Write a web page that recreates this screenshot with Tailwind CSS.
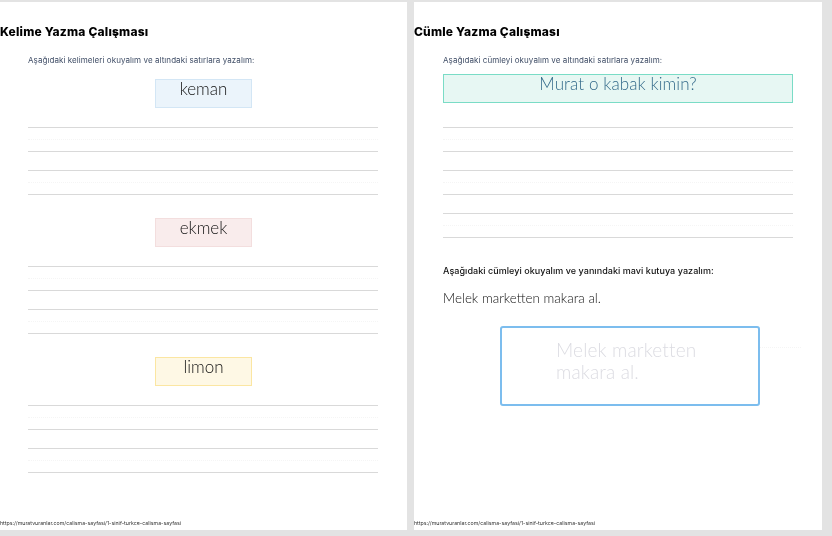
<!DOCTYPE html>
<html lang="tr">
<head>
  <meta charset="UTF-8">
  <title>Yazma Çalışması</title>
  <script src="https://cdn.jsdelivr.net/npm/@tailwindcss/browser@4"></script>
</head>
<body class="bg-[#e3e3e3] w-[832px] h-[536px] overflow-hidden font-['Inter','Liberation_Sans',sans-serif]">
  <div class="flex gap-[7px] pt-[2px] blur-[0.3px]">

    <!-- Kelime sayfasi -->
    <div class="w-[407px] h-[528px] bg-white flex flex-col">
      <h1 class="mt-[23px] h-[14px] text-[12px] leading-[14px] font-extrabold text-black tracking-[0.2px]">Kelime Yazma Çalışması</h1>
      <p class="mt-[15px] ml-[28px] h-[12px] text-[8px] leading-[12px] text-[#3f4d66] tracking-[0.07px]">Aşağıdaki kelimeleri okuyalım ve altındaki satırlara yazalım:</p>

      <div class="mt-[13px] ml-[155px] w-[97px] h-[29px] bg-[#ebf4fb] border border-[#d3e6f5] text-center text-[17px] leading-[18px] font-['Lato',sans-serif] font-light text-[#111]">keman</div>
      <div class="mt-[19px] ml-[28px] w-[350px]">
        <div class="h-[24px] border-t border-[#d9d9d9] relative"><div class="absolute top-[11px] inset-x-0 border-t border-dotted border-[#f5f5f5]"></div></div>
        <div class="h-[19px] border-t border-[#d9d9d9]"></div>
        <div class="h-[24px] border-t border-[#d9d9d9] relative"><div class="absolute top-[11px] inset-x-0 border-t border-dotted border-[#f5f5f5]"></div></div>
        <div class="border-t border-[#d9d9d9]"></div>
      </div>

      <div class="mt-[23px] ml-[155px] w-[97px] h-[29px] bg-[#f9ecec] border border-[#f3dede] text-center text-[17px] leading-[18px] font-['Lato',sans-serif] font-light text-[#111]">ekmek</div>
      <div class="mt-[19px] ml-[28px] w-[350px]">
        <div class="h-[24px] border-t border-[#d9d9d9] relative"><div class="absolute top-[11px] inset-x-0 border-t border-dotted border-[#f5f5f5]"></div></div>
        <div class="h-[19px] border-t border-[#d9d9d9]"></div>
        <div class="h-[24px] border-t border-[#d9d9d9] relative"><div class="absolute top-[11px] inset-x-0 border-t border-dotted border-[#f5f5f5]"></div></div>
        <div class="border-t border-[#d9d9d9]"></div>
      </div>

      <div class="mt-[23px] ml-[155px] w-[97px] h-[29px] bg-[#fef8e5] border border-[#fbe6a2] text-center text-[17px] leading-[18px] font-['Lato',sans-serif] font-light text-[#111]">limon</div>
      <div class="mt-[19px] ml-[28px] w-[350px]">
        <div class="h-[24px] border-t border-[#d9d9d9] relative"><div class="absolute top-[11px] inset-x-0 border-t border-dotted border-[#f5f5f5]"></div></div>
        <div class="h-[19px] border-t border-[#d9d9d9]"></div>
        <div class="h-[24px] border-t border-[#d9d9d9] relative"><div class="absolute top-[11px] inset-x-0 border-t border-dotted border-[#f5f5f5]"></div></div>
        <div class="border-t border-[#d9d9d9]"></div>
      </div>

      <p class="mt-auto mb-[3px] h-[8px] text-[5.25px] leading-[8px] text-[#333]">https://muratvuranlar.com/calisma-sayfasi/1-sinif-turkce-calisma-sayfasi</p>
    </div>

    <!-- Cumle sayfasi -->
    <div class="w-[408px] h-[528px] bg-white flex flex-col">
      <h1 class="mt-[23px] h-[14px] text-[12px] leading-[14px] font-extrabold text-black tracking-[0.2px]">Cümle Yazma Çalışması</h1>
      <p class="mt-[15px] ml-[29px] h-[12px] text-[8px] leading-[12px] text-[#3f4d66] tracking-[0.07px]">Aşağıdaki cümleyi okuyalım ve altındaki satırlara yazalım:</p>

      <div class="mt-[8px] ml-[29px] w-[350px] h-[29px] bg-[#e7f7f3] border border-[#7adcc6] text-center text-[17px] leading-[18px] font-['Lato',sans-serif] font-light tracking-[0.1px] text-[#336a8a]">Murat o kabak kimin?</div>
      <div class="mt-[24px] ml-[29px] w-[350px]">
        <div class="h-[24px] border-t border-[#d9d9d9] relative"><div class="absolute top-[11px] inset-x-0 border-t border-dotted border-[#f5f5f5]"></div></div>
        <div class="h-[19px] border-t border-[#d9d9d9]"></div>
        <div class="h-[24px] border-t border-[#d9d9d9] relative"><div class="absolute top-[11px] inset-x-0 border-t border-dotted border-[#f5f5f5]"></div></div>
        <div class="h-[19px] border-t border-[#d9d9d9]"></div>
        <div class="h-[24px] border-t border-[#d9d9d9] relative"><div class="absolute top-[11px] inset-x-0 border-t border-dotted border-[#f5f5f5]"></div></div>
        <div class="border-t border-[#d9d9d9]"></div>
      </div>

      <p class="mt-[27px] ml-[29px] h-[12px] text-[9px] leading-[12px] font-medium text-[#111] tracking-[0.05px]">Aşağıdaki cümleyi okuyalım ve yanındaki mavi kutuya yazalım:</p>
      <p class="mt-[12px] ml-[29px] h-[18px] text-[13.4px] leading-[18px] font-['Lato',sans-serif] font-light text-[#111]">Melek marketten makara al.</p>

      <div class="relative mt-[19px] ml-[86px] w-[260px] h-[80px] border-2 border-[#7cbdee] rounded-[3px] pl-[54px] pt-[11px] text-[19px] leading-[22px] font-['Lato',sans-serif] font-light tracking-[0.15px] text-[#dcdce2]">
        Melek marketten<br>makara al.
        <div class="absolute left-[258px] top-[19px] w-[41px] border-t border-dotted border-[#f5f5f5]"></div>
      </div>

      <p class="mt-auto mb-[3px] h-[8px] text-[5.25px] leading-[8px] text-[#333]">https://muratvuranlar.com/calisma-sayfasi/1-sinif-turkce-calisma-sayfasi</p>
    </div>
  </div>
</body>
</html>
